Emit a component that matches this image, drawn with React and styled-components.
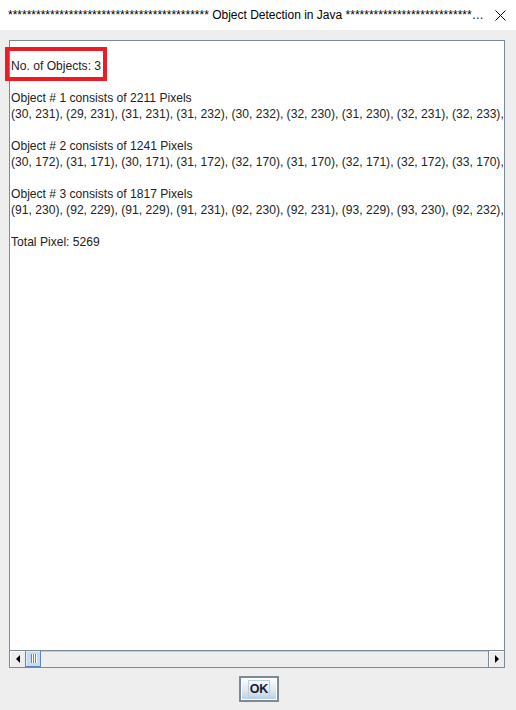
import React from 'react';
import styled, { createGlobalStyle } from 'styled-components';

const GlobalStyle = createGlobalStyle`
  html, body {
    margin: 0;
    padding: 0;
    background: #eeeeee;
  }
`;

const colors = {
  BORDER: '#7a8a99',
  PANEL: '#eeeeee',
  LIGHT_BLUE: '#b8cfe5',
  MID_BLUE: '#6382bf',
  TEXT: '#222222',
};

const Window = styled.div`
  position: relative;
  width: 516px;
  height: 710px;
  display: flex;
  flex-direction: column;
  background: ${colors.PANEL};
  font-family: 'Liberation Sans', Arial, sans-serif;
  overflow: hidden;
`;

const TitleBar = styled.div`
  height: 30px;
  flex: none;
  background: #ffffff;
  display: flex;
  align-items: center;
  padding-left: 8px;
`;

const Title = styled.div`
  width: 477px;
  font-size: 12px;
  color: #000000;
  white-space: nowrap;
  overflow: hidden;
  text-overflow: ellipsis;
`;

const CloseButton = styled.div`
  flex: none;
  width: 31px;
  height: 30px;
  display: flex;
  align-items: center;
  justify-content: center;
`;

const Body = styled.div`
  flex: 1;
  display: flex;
  flex-direction: column;
  padding: 10px 11px 0 9px;
  min-height: 0;
`;

const ScrollPane = styled.div`
  height: 626px;
  flex: none;
  display: flex;
  flex-direction: column;
  border: 1px solid ${colors.BORDER};
  background: #ffffff;
`;

const Viewport = styled.div`
  flex: 1;
  overflow: hidden;
  padding: 17px 0 0 1px;
`;

const Line = styled.div`
  height: 16px;
  line-height: 16px;
  font-size: 12.1px;
  color: ${colors.TEXT};
  white-space: pre;
  margin-bottom: ${(p) => (p.gap ? '16px' : '0')};
`;

const ScrollBar = styled.div`
  height: 16px;
  flex: none;
  display: flex;
  background: ${colors.PANEL};
  border-top: 1px solid ${colors.BORDER};
`;

const ArrowButton = styled.div`
  width: 15px;
  flex: none;
  display: flex;
  align-items: center;
  justify-content: center;
  background: ${colors.PANEL};
  box-shadow: inset 1px 1px 0 #ffffff;
  ${(p) => (p.right ? `border-left: 1px solid ${colors.BORDER};` : '')}
`;

const Thumb = styled.div`
  width: 14px;
  flex: none;
  display: flex;
  align-items: center;
  justify-content: center;
  gap: 1px;
  background: #c8dcf1;
  border: 1px solid ${colors.MID_BLUE};
  border-top: none;
  box-shadow: inset 1px 1px 0 #e3eefa;
`;

const Grip = styled.span`
  width: 1px;
  height: 9px;
  background: ${colors.MID_BLUE};
  box-shadow: 1px 0 0 #ffffff;
`;

const Track = styled.div`
  flex: 1;
  box-shadow: inset 0 1px 0 ${colors.LIGHT_BLUE};
`;

const ButtonRow = styled.div`
  display: flex;
  justify-content: center;
  padding: 8px 0 0 4px;
`;

const OkButton = styled.button`
  width: 40px;
  height: 26px;
  padding: 0;
  display: flex;
  align-items: center;
  justify-content: center;
  border: 2px solid ${colors.BORDER};
  box-shadow: inset 0 0 0 1px #ffffff;
  background: linear-gradient(#ffffff 0%, #dde8f3 55%, #b8cfe5 100%);
  font-family: 'Liberation Sans', Arial, sans-serif;
  font-size: 12.5px;
  font-weight: bold;
  color: #1a1a2e;
`;

const FocusRing = styled.span`
  padding: 1px 1px;
  line-height: 14px;
  border: 1px solid ${colors.LIGHT_BLUE};
`;

const Highlight = styled.div`
  position: absolute;
  left: 5px;
  top: 47px;
  width: 102px;
  height: 34px;
  box-sizing: border-box;
  border: 4px solid #ed1c24;
`;

const stars = (n) => '*'.repeat(n);

const objects = [
  {
    id: 1,
    size: 2211,
    pixels:
      '(30, 231), (29, 231), (31, 231), (31, 232), (30, 232), (32, 230), (31, 230), (32, 231), (32, 233), (33, 230), (33, 231), (33, 232), (34, 230)',
  },
  {
    id: 2,
    size: 1241,
    pixels:
      '(30, 172), (31, 171), (30, 171), (31, 172), (32, 170), (31, 170), (32, 171), (32, 172), (33, 170), (33, 171), (34, 170), (34, 171), (35, 170)',
  },
  {
    id: 3,
    size: 1817,
    pixels:
      '(91, 230), (92, 229), (91, 229), (91, 231), (92, 230), (92, 231), (93, 229), (93, 230), (92, 232), (93, 231), (94, 229), (94, 230), (95, 229)',
  },
];

const ArrowLeft = () => (
  <svg width='4' height='8' viewBox='0 0 4 8'>
    <path d='M4 0 L0 4 L4 8 Z' fill='#000' />
  </svg>
);

const ArrowRight = () => (
  <svg width='4' height='8' viewBox='0 0 4 8'>
    <path d='M0 0 L4 4 L0 8 Z' fill='#000' />
  </svg>
);

export default function App() {
  const total = objects.reduce((sum, o) => sum + o.size, 0);

  return (
    <>
      <GlobalStyle />
      <Window>
        <TitleBar>
          <Title>
            {stars(43)} Object Detection in Java {stars(60)}
          </Title>
          <CloseButton>
            <svg width='11' height='11' viewBox='0 0 11 11'>
              <path d='M0.5 0.5 L10.5 10.5 M10.5 0.5 L0.5 10.5' stroke='#000' strokeWidth='1' />
            </svg>
          </CloseButton>
        </TitleBar>
        <Body>
          <ScrollPane>
            <Viewport>
              <Line gap>No. of Objects: {objects.length}</Line>
              {objects.map((o) => (
                <React.Fragment key={o.id}>
                  <Line>
                    Object # {o.id} consists of {o.size} Pixels
                  </Line>
                  <Line gap>{o.pixels}</Line>
                </React.Fragment>
              ))}
              <Line>Total Pixel: {total}</Line>
            </Viewport>
            <ScrollBar>
              <ArrowButton>
                <ArrowLeft />
              </ArrowButton>
              <Thumb>
                <Grip />
                <Grip />
                <Grip />
              </Thumb>
              <Track />
              <ArrowButton right>
                <ArrowRight />
              </ArrowButton>
            </ScrollBar>
          </ScrollPane>
          <ButtonRow>
            <OkButton>
              <FocusRing>OK</FocusRing>
            </OkButton>
          </ButtonRow>
        </Body>
        <Highlight />
      </Window>
    </>
  );
}
